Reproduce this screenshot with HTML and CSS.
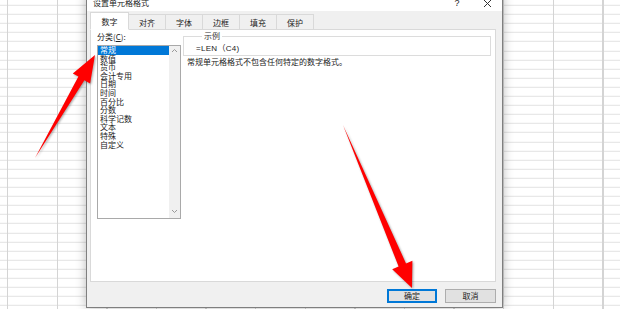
FILE: index.html
```html
<!DOCTYPE html>
<html>
	<head>
		<meta charset="UTF-8">
		<title>设置单元格格式</title>
		<link rel="stylesheet" href="styles.css">
	</head>
	<body>
		<div class="sheet"></div>
		<div class="dialog">
			<div class="titlebar">
				<span class="title">设置单元格格式</span>
				<span class="help">?</span>
				<span class="close">
					<svg width="9" height="9" viewBox="0 0 9 9"><path d="M1 1L8 8M8 1L1 8" stroke="#333" stroke-width="1" fill="none"/></svg>
				</span>
			</div>
			<div class="body">
				<div class="tabs">
					<span class="tab active">数字</span>
					<span class="tab">对齐</span>
					<span class="tab">字体</span>
					<span class="tab">边框</span>
					<span class="tab">填充</span>
					<span class="tab">保护</span>
				</div>
				<div class="panel">
					<div class="left">
						<div class="label">分类(<u>C</u>):</div>
						<div class="list">
							<ul>
								<li class="sel">常规</li>
								<li>数值</li>
								<li>货币</li>
								<li>会计专用</li>
								<li>日期</li>
								<li>时间</li>
								<li>百分比</li>
								<li>分数</li>
								<li>科学记数</li>
								<li>文本</li>
								<li>特殊</li>
								<li>自定义</li>
							</ul>
							<div class="scroll">
								<svg width="7" height="5" viewBox="0 0 7 5"><path d="M1 4L3.5 1.5L6 4" stroke="#999" fill="none"/></svg>
								<svg width="7" height="5" viewBox="0 0 7 5"><path d="M1 1L3.5 3.5L6 1" stroke="#999" fill="none"/></svg>
							</div>
						</div>
					</div>
					<div class="right">
						<fieldset class="sample">
							<legend>示例</legend>
							<div class="value">=LEN（C4)</div>
						</fieldset>
						<p class="desc">常规单元格格式不包含任何特定的数字格式。</p>
					</div>
				</div>
				<div class="footer">
					<span class="btn focus">确定</span>
					<span class="btn">取消</span>
				</div>
			</div>
		</div>
		<svg class="arrows" width="620" height="309" viewBox="0 0 620 309">
			<polygon points="35,158 78.4,76.6 72.8,73.4 95,55 90.1,83.4 84.4,80.2" fill="#ff0000"/>
			<polygon points="343,125 406,263.4 412.4,260.7 412,288 392.2,269.3 398.6,266.6" fill="#ff0000"/>
		</svg>
	</body>
</html>
```
FILE: styles.css
```css
*{
	margin: 0;
	padding: 0;
	box-sizing: border-box;
}
body{
	width: 620px;
	height: 309px;
	overflow: hidden;
	position: relative;
	background: #fff;
	font-family: "Noto Sans CJK SC", "Liberation Sans", sans-serif;
	font-size: 8px;
	color: #222;
}
.sheet{
	height: 309px;
	background-image:
		repeating-linear-gradient(90deg, #d4d4d4 0 1.5px, transparent 1.5px 49.6px),
		repeating-linear-gradient(180deg, #e2e2e2 0 1px, transparent 1px 9.1px);
	background-position: 7px 0, 0 4.8px;
}
.dialog{
	position: absolute;
	left: 86px;
	top: -8px;
	width: 417px;
	height: 316px;
	border: 1px solid #7f7f7f;
	background: #f0f0f0;
	box-shadow: 0 0 10px rgba(0,0,0,.28);
	display: flex;
	flex-direction: column;
}
.titlebar{
	height: 18px;
	background: #fff;
	display: flex;
	align-items: flex-end;
	padding: 0 10px 3px 6px;
	line-height: 10px;
}
.title{
	flex: 1;
}
.help{
	width: 10px;
	text-align: center;
	font-family: "Liberation Sans", sans-serif;
	font-size: 9px;
	margin-right: 21px;
}
.close{
	display: flex;
	height: 10px;
	align-items: center;
}
.body{
	flex: 1;
	padding: 1px 6px 0 3px;
	display: flex;
	flex-direction: column;
}
.tabs{
	height: 18px;
	display: flex;
	align-items: flex-end;
	position: relative;
	z-index: 1;
	margin-bottom: -1px;
}
.tab{
	width: 37px;
	height: 16px;
	line-height: 15px;
	text-align: center;
	border: 1px solid #d9d9d9;
	border-left: none;
	background: #f0f0f0;
}
.tab.active{
	width: 39px;
	height: 18px;
	line-height: 17px;
	background: #fff;
	border-left: 1px solid #d9d9d9;
	border-bottom-color: #fff;
}
.panel{
	height: 253px;
	background: #fff;
	border: 1px solid #d9d9d9;
	display: flex;
	padding: 2px 4px 0 6px;
}
.left{
	width: 84px;
}
.label{
	line-height: 10px;
	margin-bottom: 3px;
}
.label u{
	text-decoration: underline;
}
.list{
	height: 174px;
	border: 1px solid #a9a9a9;
	display: flex;
}
.list ul{
	flex: 1;
	list-style: none;
}
.list li{
	height: 8.6px;
	line-height: 8.6px;
	padding-left: 2px;
}
.list li.sel{
	background: #0078d7;
	color: #fff;
}
.scroll{
	width: 11px;
	background: #f0f0f0;
	display: flex;
	flex-direction: column;
	justify-content: space-between;
	align-items: center;
	padding: 2px 0 4px;
}
.right{
	flex: 1;
	margin-left: 2px;
	padding-top: 0;
	display: flex;
	flex-direction: column;
}
.sample{
	border: 1px solid #dcdcdc;
	padding: 3px 0 1px 12px;
	margin-top: -1px;
	line-height: 10px;
}
.sample legend{
	margin-left: 6px;
	padding: 0 2px;
	line-height: 10px;
	color: #333;
}
.value{
	font-family: "Liberation Sans", "Noto Sans CJK SC", sans-serif;
	font-size: 8px;
	letter-spacing: .3px;
}
.desc{
	margin-top: 1px;
	padding-left: 4px;
	line-height: 9px;
}
.footer{
	display: flex;
	justify-content: flex-end;
	gap: 8px;
	padding-top: 7px;
	padding-right: 0;
}
.btn{
	width: 51px;
	height: 14px;
	line-height: 12px;
	text-align: center;
	background: #e1e1e1;
	border: 1px solid #adadad;
}
.btn.focus{
	width: 50px;
	border: 1px solid #0078d7;
	box-shadow: inset 0 0 0 1px #0078d7;
}
.arrows{
	position: absolute;
	left: 0;
	top: 0;
	filter: drop-shadow(1px 1px 1px rgba(0,0,0,.35));
}
```
